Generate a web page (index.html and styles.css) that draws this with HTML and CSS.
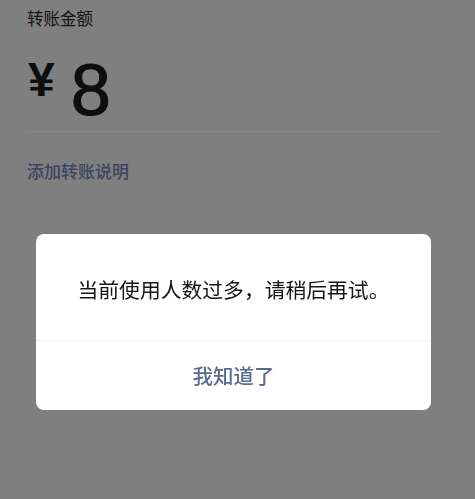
FILE: index.html
```html
<!DOCTYPE html>
<html lang="zh-CN">
<head>
<meta charset="utf-8">
<title>转账</title>
<link rel="stylesheet" href="styles.css">
</head>
<body>
<div class="page">
  <div class="label">转账金额</div>
  <div class="amount">
    <span class="currency">¥</span>
    <span class="value">8</span>
  </div>
  <div class="rule"></div>
  <div class="note">添加转账说明</div>
</div>
<div class="mask">
  <div class="dialog">
    <div class="dialog-body">当前使用人数过多，请稍后再试。</div>
    <div class="dialog-foot">我知道了</div>
  </div>
</div>
</body>
</html>
```
FILE: styles.css
```css
html, body {
  margin: 0;
  padding: 0;
  background: #7f7f7f;
  font-family: "Noto Sans CJK SC", "Noto Sans", sans-serif;
}
.page {
  padding: 6px 35px 0 27px;
  height: 499px;
  box-sizing: border-box;
}
.label {
  font-size: 16.5px;
  line-height: 24px;
  color: #141414;
}
.amount {
  display: flex;
  align-items: flex-start;
  gap: 16px;
  margin-top: 24px;
  height: 72px;
  font-family: "Liberation Sans", Arial, sans-serif;
  color: #0e0e0e;
}
.currency {
  font-size: 48px;
  font-weight: bold;
  line-height: 1;
  margin-top: 2px;
  margin-left: 1px;
}
.value {
  font-size: 72px;
  line-height: 1;
  -webkit-text-stroke: 1.2px #0e0e0e;
}
.rule {
  height: 1px;
  background: #868686;
  margin-top: 5px;
}
.note {
  margin-top: 27px;
  font-size: 17px;
  line-height: 24px;
  font-weight: 500;
  color: #3b4460;
}
.mask {
  position: fixed;
  inset: 0;
}
.dialog {
  position: absolute;
  left: 36px;
  top: 234px;
  width: 395px;
  background: #fff;
  border-radius: 8px;
  overflow: hidden;
}
.dialog-body {
  height: 107px;
  display: flex;
  align-items: center;
  justify-content: center;
  font-size: 20.8px;
  color: #151515;
  border-bottom: 1px solid #f0f0f0;
  padding-top: 4px;
  box-sizing: border-box;
}
.dialog-foot {
  height: 69px;
  display: flex;
  align-items: center;
  justify-content: center;
  font-size: 20.5px;
  font-weight: 500;
  color: #5b6a8e;
  padding-bottom: 1px;
  box-sizing: border-box;
}
```
